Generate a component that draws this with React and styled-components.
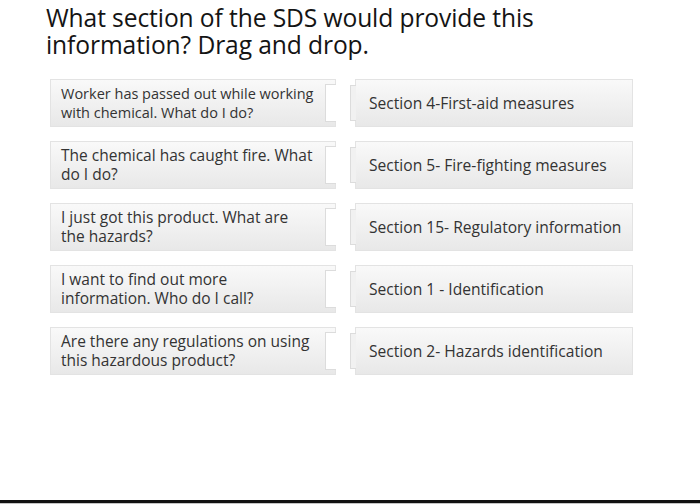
import React from "react";
import styled, { createGlobalStyle } from "styled-components";

const GlobalStyle = createGlobalStyle`
  html, body {
    margin: 0;
    padding: 0;
    background: #ffffff;
  }
  body {
    font-family: "Open Sans", "Noto Sans", sans-serif;
  }
`;

const Page = styled.div`
  height: 504px;
  display: flex;
  flex-direction: column;
  box-sizing: border-box;
`;

const Title = styled.h1`
  margin: 0;
  padding: 4px 0 0 46px;
  font-size: 24.6px;
  font-weight: 400;
  line-height: 27px;
  letter-spacing: -0.1px;
  color: #141414;
`;

const Board = styled.div`
  display: grid;
  grid-template-columns: 286px 286px;
  column-gap: 14px;
  row-gap: 14px;
  grid-auto-rows: 48px;
  margin: 21px 0 0 50px;
`;

const Card = styled.div`
  position: relative;
  display: flex;
  align-items: center;
  box-sizing: border-box;
  border: 1px solid #e3e3e3;
  background: linear-gradient(#f9f9f9, #e8e8e8);
  color: #333;
`;

const Question = styled(Card)`
  padding: 0 ${(p) => (p.small ? "16px" : "20px")} 0 10px;
  font-size: ${(p) => (p.small ? "14.5px" : "15.5px")};
  line-height: 19px;

  &::after {
    content: "";
    position: absolute;
    right: -1px;
    top: 4px;
    bottom: 4px;
    width: 10px;
    background: #ffffff;
    border: 1px solid #dcdcdc;
    border-right: none;
  }
`;

const Answer = styled(Card)`
  margin-left: 5px;
  margin-right: 3px;
  padding-left: 13px;
  font-size: 15.6px;
  line-height: 19px;

  &::before {
    content: "";
    position: absolute;
    left: -6px;
    top: 5px;
    bottom: 5px;
    width: 5px;
    background: #f1f1f1;
    border: 1px solid #dcdcdc;
    border-right: none;
  }
`;

const Rule = styled.div`
  margin-top: auto;
  margin-bottom: 1px;
  height: 3px;
  background: #111;
  box-shadow: 0 1px 0 #c4c4c4;
`;

const rows = [
  {
    q: "Worker has passed out while working with chemical. What do I do?",
    small: true,
    a: "Section 4-First-aid measures",
  },
  { q: "The chemical has caught fire. What do I do?", a: "Section 5- Fire-fighting measures" },
  { q: "I just got this product. What are the hazards?", a: "Section 15- Regulatory information" },
  { q: "I want to find out more information. Who do I call?", a: "Section 1 - Identification" },
  { q: "Are there any regulations on using this hazardous product?", a: "Section 2- Hazards identification" },
];

export default function App() {
  return (
    <Page>
      <GlobalStyle />
      <Title>
        What section of the SDS would provide this
        <br />
        information? Drag and drop.
      </Title>
      <Board>
        {rows.map((r) => (
          <React.Fragment key={r.a}>
            <Question small={r.small}>{r.q}</Question>
            <Answer>{r.a}</Answer>
          </React.Fragment>
        ))}
      </Board>
      <Rule />
    </Page>
  );
}
